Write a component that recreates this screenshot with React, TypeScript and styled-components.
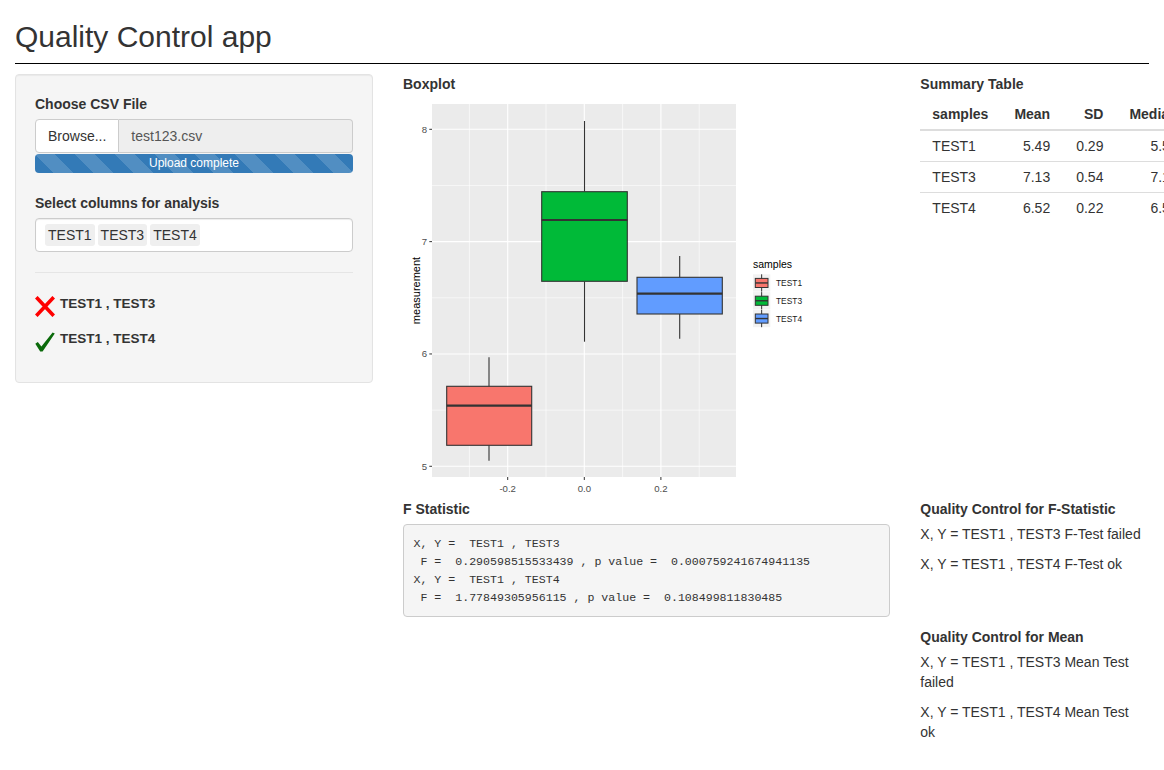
import React from "react";
import styled, { createGlobalStyle } from "styled-components";

const GlobalStyle = createGlobalStyle`
  html, body { margin: 0; padding: 0; }
  body {
    overflow-x: hidden;
    background: #fff;
    color: #333;
    font-family: "Liberation Sans", Arial, Helvetica, sans-serif;
    font-size: 14px;
    line-height: 1.42857143;
  }
  * { box-sizing: border-box; }
`;

const Container = styled.div`
  padding: 0 15px;
`;

const Title = styled.h2`
  margin: 20px 0 10px;
  font-size: 30px;
  font-weight: 500;
  line-height: 1.1;
  color: #333;
`;

const Rule = styled.div`
  border-top: 1px solid #000;
  margin-bottom: 10px;
`;

const Row = styled.div`
  display: flex;
  margin: 0 -15px;
`;

const Col = styled.div<{ $span: number }>`
  flex: 0 0 ${(p) => (p.$span / 12) * 100}%;
  width: ${(p) => (p.$span / 12) * 100}%;
  padding: 0 15px;
  min-width: 0;
`;

const Well = styled.div`
  background: #f5f5f5;
  border: 1px solid #e3e3e3;
  border-radius: 4px;
  padding: 19px;
  box-shadow: inset 0 1px 1px rgba(0, 0, 0, 0.05);
`;

const Label = styled.div`
  font-weight: 700;
  font-size: 14px;
  line-height: 20px;
  margin-bottom: 5px;
`;

const InputGroup = styled.div`
  display: flex;
  height: 34px;
`;

const BrowseButton = styled.div`
  flex: none;
  background: #fff;
  border: 1px solid #ccc;
  border-radius: 4px 0 0 4px;
  padding: 6px 12px;
  line-height: 20px;
  color: #333;
`;

const FileName = styled.div`
  flex: 1;
  background: #eee;
  border: 1px solid #ccc;
  border-left: none;
  border-radius: 0 4px 4px 0;
  padding: 6px 12px;
  line-height: 20px;
  color: #555;
`;

const Progress = styled.div`
  margin-top: 1px;
  margin-bottom: 20px;
  height: 19px;
  border-radius: 4px;
  overflow: hidden;
  background-color: #337ab7;
  background-image: linear-gradient(
    45deg,
    rgba(255, 255, 255, 0.15) 25%,
    transparent 25%,
    transparent 50%,
    rgba(255, 255, 255, 0.15) 50%,
    rgba(255, 255, 255, 0.15) 75%,
    transparent 75%,
    transparent
  );
  background-size: 40px 40px;
  color: #fff;
  font-size: 12px;
  line-height: 19px;
  text-align: center;
`;

const SelectBox = styled.div`
  display: flex;
  gap: 3px;
  height: 34px;
  background: #fff;
  border: 1px solid #ccc;
  border-radius: 4px;
  padding: 5px 9px;
  box-shadow: inset 0 1px 1px rgba(0, 0, 0, 0.075);
`;

const Chip = styled.span`
  background: #efefef;
  border-radius: 3px;
  padding: 1px 3px;
  line-height: 20px;
  height: 22px;
  color: #333;
`;

const Divider = styled.div`
  border-top: 1px solid #e5e5e5;
  margin: 20px 0 20px;
`;

const ResultRow = styled.div`
  display: flex;
  align-items: flex-start;
  gap: 5px;
  height: 35px;
`;

const ResultText = styled.span`
  font-weight: 700;
  font-size: 13.5px;
  line-height: 20px;
  margin-top: 1px;
`;

const IconBox = styled.svg<{ $top: number }>`
  flex: none;
  margin-top: ${(p) => p.$top}px;
  display: block;
`;

const PlotWrap = styled.div`
  height: 400px;
`;

const PlotSvg = styled.svg`
  display: block;
  font-family: "Liberation Sans", Arial, sans-serif;
`;

const Pre = styled.pre`
  margin: 0;
  padding: 9.5px;
  background: #f5f5f5;
  border: 1px solid #ccc;
  border-radius: 4px;
  font-family: "Liberation Mono", "DejaVu Sans Mono", monospace;
  font-size: 11.6px;
  line-height: 18px;
  color: #333;
  white-space: pre;
`;

const Table = styled.table`
  border-collapse: collapse;
  white-space: nowrap;
  font-size: 14px;
`;

const Th = styled.th<{ $left?: boolean }>`
  padding: 5px 13px;
  line-height: 20px;
  font-weight: 700;
  text-align: ${(p) => (p.$left ? "left" : "right")};
  border-bottom: 2px solid #ddd;
  &:first-child { padding-left: 12px; }
`;

const Td = styled.td<{ $left?: boolean }>`
  padding: 5px 13px;
  line-height: 20px;
  text-align: ${(p) => (p.$left ? "left" : "right")};
  border-top: 1px solid #ddd;
  &:first-child { padding-left: 12px; }
`;

const Para = styled.p`
  margin: 0 0 10px;
  line-height: 20px;
`;

const Section = styled.div<{ $top?: number }>`
  margin-top: ${(p) => p.$top ?? 0}px;
  max-width: 224px;
`;

const yv = (v: number) => 129.3 + (8 - v) * 112.33;
const xv = (v: number) => 584.3 + v * 383;

const boxes = [
  { name: "TEST1", fill: "#F8766D", x0: 446.7, x1: 531.7, q3: 386.3, med: 405.7, q1: 445.3, hi: 357.3, lo: 460.7, cx: 489 },
  { name: "TEST3", fill: "#00BA38", x0: 541.7, x1: 627.3, q3: 191.7, med: 220, q1: 281.3, hi: 121, lo: 341.7, cx: 584.5 },
  { name: "TEST4", fill: "#619CFF", x0: 637, x1: 722.3, q3: 277.3, med: 293.7, q1: 314, hi: 256, lo: 338.7, cx: 679.7 },
];

const PX0 = 432;
const PX1 = 736;
const PY0 = 104;
const PY1 = 477;

function Boxplot() {
  const majorY = [5, 6, 7, 8];
  const minorY = [5.5, 6.5, 7.5];
  const majorX = [-0.2, 0, 0.2];
  const minorX = [-0.3, -0.1, 0.1, 0.3];
  return (
    <PlotSvg width={420} height={400} viewBox="0 0 420 400">
      <g transform="translate(-403,-99)">
        <rect x={PX0} y={PY0} width={PX1 - PX0} height={PY1 - PY0} fill="#EBEBEB" />
        {minorY.map((v) => (
          <line key={"my" + v} x1={PX0} x2={PX1} y1={yv(v)} y2={yv(v)} stroke="#fff" strokeWidth={0.6} />
        ))}
        {minorX.map((v) => (
          <line key={"mx" + v} x1={xv(v)} x2={xv(v)} y1={PY0} y2={PY1} stroke="#fff" strokeWidth={0.6} />
        ))}
        {majorY.map((v) => (
          <line key={"Y" + v} x1={PX0} x2={PX1} y1={yv(v)} y2={yv(v)} stroke="#fff" strokeWidth={1.1} />
        ))}
        {majorX.map((v) => (
          <line key={"X" + v} x1={xv(v)} x2={xv(v)} y1={PY0} y2={PY1} stroke="#fff" strokeWidth={1.1} />
        ))}
        {boxes.map((b) => (
          <g key={b.name}>
            <line x1={b.cx} x2={b.cx} y1={b.hi} y2={b.q3} stroke="#333" strokeWidth={1.1} />
            <line x1={b.cx} x2={b.cx} y1={b.q1} y2={b.lo} stroke="#333" strokeWidth={1.1} />
            <rect x={b.x0} y={b.q3} width={b.x1 - b.x0} height={b.q1 - b.q3} fill={b.fill} stroke="#333" strokeWidth={1.1} />
            <line x1={b.x0} x2={b.x1} y1={b.med} y2={b.med} stroke="#333" strokeWidth={2.2} />
          </g>
        ))}
        {majorY.map((v) => (
          <g key={"ty" + v}>
            <line x1={429.3} x2={PX0} y1={yv(v)} y2={yv(v)} stroke="#333" strokeWidth={1} />
            <text x={427} y={yv(v)} dy="0.36em" textAnchor="end" fontSize={9.6} fill="#4D4D4D">
              {v}
            </text>
          </g>
        ))}
        {majorX.map((v) => (
          <g key={"tx" + v}>
            <line x1={xv(v)} x2={xv(v)} y1={PY1} y2={480} stroke="#333" strokeWidth={1} />
            <text x={xv(v)} y={491.7} textAnchor="middle" fontSize={9.6} fill="#4D4D4D">
              {v === 0 ? "0.0" : v.toFixed(1)}
            </text>
          </g>
        ))}
        <text transform="translate(419.5,290.5) rotate(-90)" textAnchor="middle" fontSize={11} fill="#000">
          measurement
        </text>
        <text x={753} y={268.3} fontSize={10.5} fill="#000">
          samples
        </text>
        {boxes.map((b, i) => {
          const ky = 274.3 + i * 17.8;
          return (
            <g key={"lg" + b.name}>
              <rect x={753} y={ky} width={17.3} height={17.3} fill="#F2F2F2" />
              <line x1={761.65} x2={761.65} y1={ky} y2={ky + 17.3} stroke="#333" strokeWidth={1} />
              <rect x={755.3} y={ky + 4.1} width={12.7} height={9.1} fill={b.fill} stroke="#333" strokeWidth={1} />
              <line x1={755.3} x2={768} y1={ky + 8.65} y2={ky + 8.65} stroke="#333" strokeWidth={1.4} />
              <text x={776} y={ky + 11.8} fontSize={8.4} fill="#1a1a1a">
                {b.name}
              </text>
            </g>
          );
        })}
      </g>
    </PlotSvg>
  );
}

function CrossIcon() {
  return (
    <IconBox $top={3} width={20} height={21} viewBox="0 0 20 21">
      <path d="M2.5 2.5 L17.5 18.5 M17.5 2.5 L2.5 18.5" stroke="#ff0000" strokeWidth={3.6} strokeLinecap="square" fill="none" />
    </IconBox>
  );
}

function CheckIcon() {
  return (
    <IconBox $top={4} width={20} height={20} viewBox="0 0 20 20">
      <path d="M0.3 11.8 L2.8 10 L6.4 14.6 L17.6 0.6 L19.8 1.6 L7.6 19.4 L5.2 19.4 Z" fill="#0b6a0b" />
    </IconBox>
  );
}

const tableRows = [
  { s: "TEST1", mean: "5.49", sd: "0.29", med: "5.54" },
  { s: "TEST3", mean: "7.13", sd: "0.54", med: "7.19" },
  { s: "TEST4", mean: "6.52", sd: "0.22", med: "6.53" },
];

const fText = `X, Y =  TEST1 , TEST3
 F =  0.290598515533439 , p value =  0.000759241674941135
X, Y =  TEST1 , TEST4
 F =  1.77849305956115 , p value =  0.108499811830485`;

export default function App() {
  return (
    <>
      <GlobalStyle />
      <Container>
        <Title>Quality Control app</Title>
        <Rule />
        <Row>
          <Col $span={4}>
            <Well>
              <Label>Choose CSV File</Label>
              <InputGroup>
                <BrowseButton>Browse...</BrowseButton>
                <FileName>test123.csv</FileName>
              </InputGroup>
              <Progress>Upload complete</Progress>
              <Label>Select columns for analysis</Label>
              <SelectBox>
                <Chip>TEST1</Chip>
                <Chip>TEST3</Chip>
                <Chip>TEST4</Chip>
              </SelectBox>
              <Divider />
              <ResultRow>
                <CrossIcon />
                <ResultText>TEST1 , TEST3</ResultText>
              </ResultRow>
              <ResultRow>
                <CheckIcon />
                <ResultText>TEST1 , TEST4</ResultText>
              </ResultRow>
            </Well>
          </Col>
          <Col $span={8}>
            <Row>
              <Col $span={8}>
                <Label>Boxplot</Label>
                <PlotWrap>
                  <Boxplot />
                </PlotWrap>
              </Col>
              <Col $span={4}>
                <Label>Summary Table</Label>
                <Table>
                  <thead>
                    <tr>
                      <Th $left>samples</Th>
                      <Th>Mean</Th>
                      <Th>SD</Th>
                      <Th>Median</Th>
                    </tr>
                  </thead>
                  <tbody>
                    {tableRows.map((r) => (
                      <tr key={r.s}>
                        <Td $left>{r.s}</Td>
                        <Td>{r.mean}</Td>
                        <Td>{r.sd}</Td>
                        <Td>{r.med}</Td>
                      </tr>
                    ))}
                  </tbody>
                </Table>
              </Col>
            </Row>
            <Row>
              <Col $span={8}>
                <Label>F Statistic</Label>
                <Pre>{fText}</Pre>
              </Col>
              <Col $span={4}>
                <Section>
                  <Label>Quality Control for F-Statistic</Label>
                  <Para>X, Y = TEST1 , TEST3 F-Test failed</Para>
                  <Para>X, Y = TEST1 , TEST4 F-Test ok</Para>
                </Section>
                <Section $top={53}>
                  <Label>Quality Control for Mean</Label>
                  <Para>X, Y = TEST1 , TEST3 Mean Test failed</Para>
                  <Para>X, Y = TEST1 , TEST4 Mean Test ok</Para>
                </Section>
              </Col>
            </Row>
          </Col>
        </Row>
      </Container>
    </>
  );
}
